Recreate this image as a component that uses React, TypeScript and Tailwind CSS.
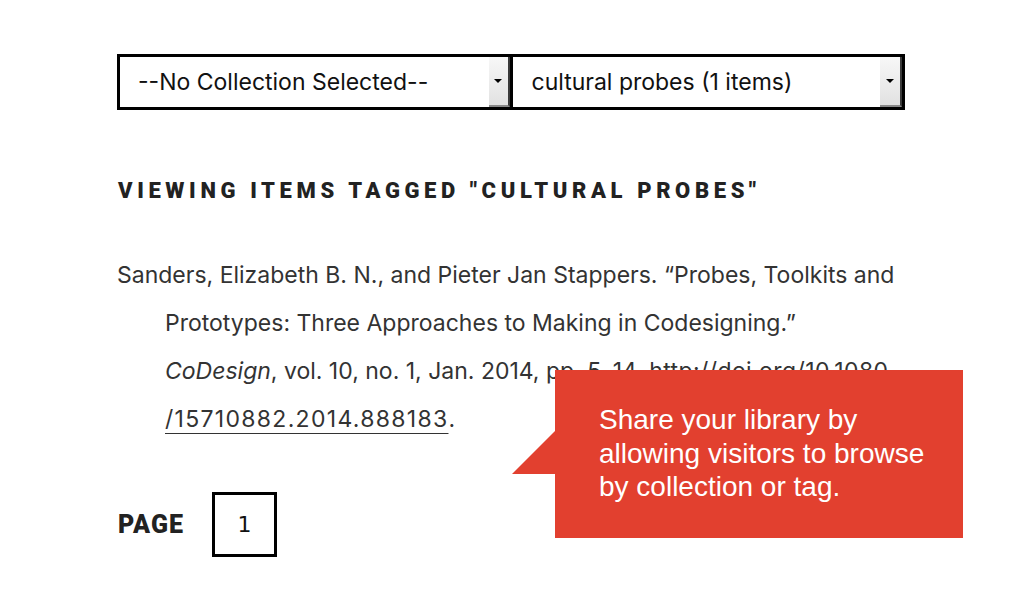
import React from 'react';

function SelectBox({ label, textPad, arrowW, divider }: { label: string; textPad: string; arrowW: string; divider?: boolean }) {
  return (
    <div className={`flex flex-1 items-stretch ${divider ? 'border-r-[3px] border-black' : ''}`}>
      <div className={`flex flex-1 items-center ${textPad} text-[23px] text-[#111]`}>{label}</div>
      <div
        className={`${arrowW} flex items-center justify-center bg-gradient-to-b from-[#f7f7f7] to-[#e2e2e2] border-r-2 border-r-[#3a3a3a] border-b-2 border-b-[#8a8a8a]`}
      >
        <div className="w-0 h-0 border-l-[4px] border-r-[4px] border-t-[4px] border-l-transparent border-r-transparent border-t-black" />
      </div>
    </div>
  );
}

export default function App() {
  return (
    <div className="relative w-[1024px] h-[600px] overflow-hidden bg-white font-['Inter',sans-serif]">
      <div className="ml-[117px] w-[788px] pt-[54px]">
        {/* Filters */}
        <div className="flex h-[56px] border-[3px] border-black">
          <SelectBox label="--No Collection Selected--" textPad="pl-[18px]" arrowW="w-[21px]" divider />
          <SelectBox label="cultural probes (1 items)" textPad="pl-[19px]" arrowW="w-[22px]" />
        </div>

        {/* Heading */}
        <h2 className="mt-[68px] ml-[1px] text-[22px] leading-[26px] font-black uppercase tracking-[0.21em] text-[#222] font-['Roboto',sans-serif]">
          Viewing items tagged "cultural probes"
        </h2>

        {/* Citation */}
        <p className="mt-[47px] pl-[48px] -indent-[48px] text-[23px] leading-[48px] text-[#333] whitespace-nowrap">
          Sanders, Elizabeth B. N., and Pieter Jan Stappers. “Probes, Toolkits and
          <br />
          Prototypes: Three Approaches to Making in Codesigning.”
          <br />
          <i>CoDesign</i>, vol. 10, no. 1, Jan. 2014, pp. 5–14, <a className="underline decoration-1 underline-offset-[6px] tracking-[0.4px]">http://doi.org/10.1080
          <br />
          <span className="tracking-[1.3px]">/15710882.2014.888183</span></a>.
        </p>

        {/* Pagination */}
        <div className="mt-[49px] flex items-center gap-[28px]">
          <span className="ml-[1px] text-[25px] font-black uppercase tracking-[0.04em] text-[#222] font-['Roboto',sans-serif]">Page</span>
          <div className="flex h-[65px] w-[65px] items-center justify-center border-[3px] border-black text-[22px] text-[#111] font-['DejaVu_Sans',sans-serif]">
            1
          </div>
        </div>
      </div>

      {/* Callout */}
      <svg className="absolute left-[512px] top-[430px]" width="44" height="44" viewBox="0 0 44 44">
        <polygon points="44,0 0,44 44,44" fill="#e2402f" />
      </svg>
      <div className="absolute left-[555px] top-[370px] w-[408px] h-[168px] bg-[#e2402f] pl-[44px] pt-[33px] text-[28px] leading-[33.5px] text-white font-['Liberation_Sans',sans-serif]">
        Share your library by
        <br />
        allowing visitors to browse
        <br />
        by collection or tag.
      </div>
    </div>
  );
}
